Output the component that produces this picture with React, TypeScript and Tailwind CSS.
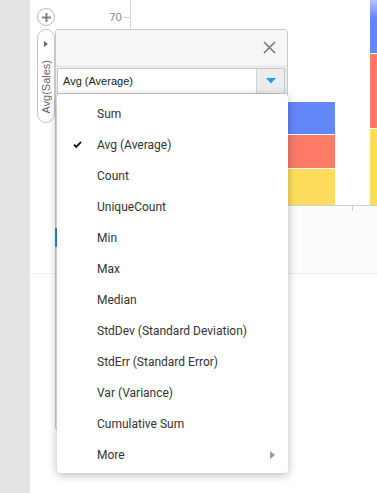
import React from "react";

const items = [
  "Sum",
  "Avg (Average)",
  "Count",
  "UniqueCount",
  "Min",
  "Max",
  "Median",
  "StdDev (Standard Deviation)",
  "StdErr (Standard Error)",
  "Var (Variance)",
  "Cumulative Sum",
  "More",
];

function Chart() {
  // svg x = page x - 60
  return (
    <svg width={317} height={273} className="block" xmlns="http://www.w3.org/2000/svg">
      <defs>
        <linearGradient id="bluefade" x1="0" y1="0" x2="0" y2="1">
          <stop offset="0" stopColor="#b3c4fb" />
          <stop offset="0.35" stopColor="#6387f9" />
          <stop offset="1" stopColor="#6387f9" />
        </linearGradient>
      </defs>
      <rect x={0} y={206} width={317} height={67} fill="#fcfcfd" />
      <text x={62} y={21} textAnchor="end" fontSize={11.5} fill="#888" fontFamily="'Liberation Sans', Arial, sans-serif">
        70
      </text>
      <line x1={64} y1={17.5} x2={70} y2={17.5} stroke="#d3d3db" strokeWidth={1} />
      <line x1={70.5} y1={0} x2={70.5} y2={206} stroke="#d8d8e0" strokeWidth={1} />
      {/* bar 1 */}
      <rect x={180} y={102} width={95} height={32} fill="#6387f9" />
      <rect x={180} y={135} width={95} height={33} fill="#fd7a67" />
      <rect x={180} y={169} width={95} height={36} fill="#ffdd5c" />
      {/* bar 2 */}
      <rect x={310} y={0} width={10} height={53} fill="url(#bluefade)" />
      <rect x={310} y={54} width={10} height={74} fill="#fd7a67" />
      <rect x={310} y={129} width={10} height={76} fill="#ffdd5c" />
      <line x1={70} y1={205.5} x2={317} y2={205.5} stroke="#d0d0da" strokeWidth={1} />
      <line x1={292.5} y1={205} x2={292.5} y2={211} stroke="#d0d0da" strokeWidth={1} />
    </svg>
  );
}

export default function App() {
  return (
    <div className="relative w-[377px] h-[493px] overflow-hidden flex bg-white font-['Liberation_Sans',Arial,sans-serif]">
      <div className="w-[30px] h-full bg-[#e4e4e4]" />
      <div className="flex-1 flex flex-col">
        <div className="h-[273px] flex">
          <div className="w-[30px] pl-[7px] flex flex-col items-start">
            <div className="mt-[8px] w-[18px] h-[18px] rounded-full border border-[#b8b8b8] flex items-center justify-center">
              <svg width="9" height="9" viewBox="0 0 9 9">
                <rect x="3.6" y="0" width="1.8" height="9" fill="#777" />
                <rect x="0" y="3.6" width="9" height="1.8" fill="#777" />
              </svg>
            </div>
            <div className="mt-[3px] w-[18px] h-[94px] rounded-full border border-[#c6c6c6] bg-white flex flex-col items-center">
              <svg className="mt-[11px]" width="4" height="6" viewBox="0 0 4 6">
                <path d="M0 0 L4 3 L0 6 Z" fill="#666" />
              </svg>
              <div className="mt-[13px] text-[11px] leading-[16px] text-[#666] [writing-mode:vertical-rl] rotate-180">
                Avg(Sales)
              </div>
            </div>
          </div>
          <Chart />
        </div>
        <div className="flex-1 border-t border-[#efeff4] bg-white" />
      </div>

      {/* dialog panel */}
      <div className="absolute left-[55px] top-[29px] w-[233px] h-[401px] border border-[#c9c9c9] rounded-[3px] bg-[#ebebeb] flex flex-col overflow-hidden">
        <div className="h-[35px] bg-[#f6f6f6] flex items-center justify-end pr-[11px]">
          <svg width="13" height="13" viewBox="0 0 13 13">
            <path d="M1 1 L12 12 M12 1 L1 12" stroke="#777" strokeWidth="1.6" />
          </svg>
        </div>
        <div className="flex-1 pt-[3px] pl-[1px] pr-[2px]">
          <div className="h-[26px] border border-[#c8c8c8] bg-white flex">
            <div className="flex-1 pl-[5px] flex items-center text-[11px] text-[#222]">Avg (Average)</div>
            <div className="w-[28px] border-l border-[#d2d2d2] bg-[#ececec] flex items-center justify-center">
              <svg width="10" height="6" viewBox="0 0 10 6">
                <path d="M0 0 L10 0 L5 5.5 Z" fill="#1f9cf0" />
              </svg>
            </div>
          </div>
        </div>
        <div className="h-[16px] border-t border-[#d8d8d8]" />
      </div>
      <div className="absolute left-[55px] top-[228px] w-[2px] h-[19px] bg-[#2a8ad4]" />

      {/* dropdown menu */}
      <div className="absolute left-[57px] top-[94px] w-[231px] h-[379px] bg-white rounded-[4px] shadow-[0_2px_10px_rgba(0,0,0,0.28)] pt-[4px] font-['Roboto',sans-serif] text-[12px] text-[#333]">
        {items.map((it) => (
          <div key={it} className="h-[31px] flex items-center pr-[13px]">
            <div className="w-[40px] flex items-center justify-center">
              {it === "Avg (Average)" && (
                <svg width="9" height="8" viewBox="0 0 9 8">
                  <path d="M0.3 4.2 L1.8 2.9 L3.3 4.6 L7.5 0.3 L8.6 1.4 L3.3 7.2 Z" fill="#111" />
                </svg>
              )}
            </div>
            <div className="flex-1">{it}</div>
            {it === "More" && (
              <svg width="5" height="8" viewBox="0 0 5 8">
                <path d="M0 0 L5 4 L0 8 Z" fill="#999" />
              </svg>
            )}
          </div>
        ))}
      </div>
    </div>
  );
}
